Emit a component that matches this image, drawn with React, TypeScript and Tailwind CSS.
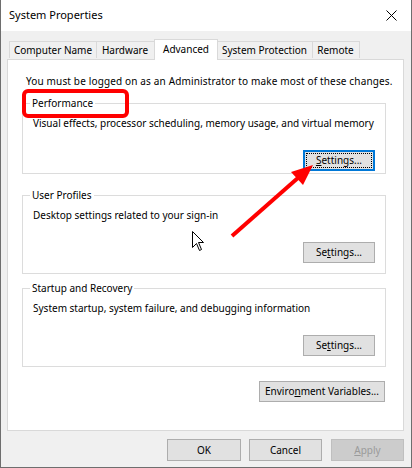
import { JSX, ReactNode } from "react";

const font = { fontFamily: '"Noto Sans", "Open Sans", sans-serif' };

function Btn({
  children,
  className = "",
  focused = false,
  disabled = false,
}: {
  children: ReactNode;
  className?: string;
  focused?: boolean;
  disabled?: boolean;
}): JSX.Element {
  if (focused) {
    return (
      <div className={`border-2 border-[#0078d7] bg-[#e1e1e1] p-px ${className}`}>
        <div className="h-full border border-dotted border-black flex items-center justify-center text-black">
          {children}
        </div>
      </div>
    );
  }
  return (
    <div
      className={`border flex items-center justify-center ${
        disabled
          ? "border-[#bfbfbf] bg-[#cccccc] text-[#9a9a9a]"
          : "border-[#adadad] bg-[#e1e1e1] text-black"
      } ${className}`}
    >
      {children}
    </div>
  );
}

function Group({
  label,
  desc,
  button,
  className,
}: {
  label: string;
  desc: string;
  button: ReactNode;
  className: string;
}): JSX.Element {
  return (
    <div className={`relative ml-[14px] w-[364px] border border-[#dcdcdc] ${className}`}>
      <span className="absolute left-[7px] -top-[9px] bg-white px-[2px] leading-4">{label}</span>
      <p className="pl-[10px] pt-[11px] leading-4">{desc}</p>
      <div className="flex justify-end pr-[10px] mt-[19px]">{button}</div>
    </div>
  );
}

export default function App(): JSX.Element {
  return (
    <div
      className="relative w-[412px] h-[468px] bg-[#f0f0f0] border-x border-b border-[#6e6e6e] text-[10px] text-black overflow-hidden whitespace-nowrap"
      style={font}
    >
      {/* title bar */}
      <div className="h-[31px] bg-white flex items-center justify-between pl-[8px] pr-[10px]">
        <span className="text-[11px]">System Properties</span>
        <svg width="11" height="11" viewBox="0 0 11 11" className="mr-[4px]">
          <path d="M0.5 0.5 L10.5 10.5 M10.5 0.5 L0.5 10.5" stroke="#000" strokeWidth="1" />
        </svg>
      </div>

      {/* tabs */}
      <div className="flex items-end h-[21px] mt-[7px] ml-[8px]">
        <div className="w-[88px] h-[17px] mb-px border-l border-t border-r border-[#d9d9d9] flex items-center justify-center">
          Computer Name
        </div>
        <div className="w-[59px] h-[17px] mb-px -ml-px border-t border-r border-[#d9d9d9] flex items-center justify-center">
          Hardware
        </div>
        <div className="relative z-10 w-[64px] h-[21px] -ml-px -mb-px border-l border-t border-r border-[#d9d9d9] bg-white flex items-center justify-center pb-[2px]">
          Advanced
        </div>
        <div className="w-[96px] h-[17px] mb-px -ml-px border-t border-r border-[#d9d9d9] flex items-center justify-center">
          System Protection
        </div>
        <div className="w-[48px] h-[17px] mb-px -ml-px border-t border-r border-[#d9d9d9] flex items-center justify-center">
          Remote
        </div>
      </div>

      {/* panel */}
      <div className="ml-[6px] w-[397px] h-[372px] border border-[#d9d9d9] bg-white">
        <p className="pl-[18px] pt-[13px] leading-4 tracking-[0.15px]">
          You must be logged on as an Administrator to make most of these changes.
        </p>
        <Group
          label="Performance"
          desc="Visual effects, processor scheduling, memory usage, and virtual memory"
          className="h-[71px] mt-[14px]"
          button={
            <Btn focused className="w-[72px] h-[21px]">
              <span>
                <u>S</u>ettings...
              </span>
            </Btn>
          }
        />
        <Group
          label="User Profiles"
          desc="Desktop settings related to your sign-in"
          className="h-[79px] mt-[21px]"
          button={
            <Btn className="w-[72px] h-[21px]">
              <span>
                Se<u>t</u>tings...
              </span>
            </Btn>
          }
        />
        <Group
          label="Startup and Recovery"
          desc="System startup, system failure, and debugging information"
          className="h-[79px] mt-[14px]"
          button={
            <Btn className="w-[72px] h-[21px]">
              <span>
                Se<u>t</u>tings...
              </span>
            </Btn>
          }
        />
        <div className="flex justify-end mt-[14px] pr-[18px]">
          <Btn className="w-[126px] h-[21px]">
            <span>
              Enviro<u>n</u>ment Variables...
            </span>
          </Btn>
        </div>
      </div>

      {/* dialog buttons */}
      <div className="flex justify-end gap-[8px] mt-[8px] pr-[7px]">
        <Btn className="w-[74px] h-[22px]">OK</Btn>
        <Btn className="w-[73px] h-[22px]">Cancel</Btn>
        <Btn disabled className="w-[73px] h-[22px] ml-px">
          <span>
            <u>A</u>pply
          </span>
        </Btn>
      </div>

      {/* annotations */}
      <div className="absolute left-[21px] top-[89px] w-[107px] h-[29px] border-4 border-[#ff0000] rounded-[6px]" />
      <svg className="absolute left-0 top-0 pointer-events-none" width="412" height="468">
        <line x1="231" y1="236" x2="298" y2="177" stroke="#ff0000" strokeWidth="4" />
        <polygon points="312,165 302,185 290,172" fill="#ff0000" />
        <path
          d="M191.5 231.5 L191.5 247.5 L195.5 243.5 L198.5 250.5 L200.5 249.5 L197.5 242.5 L202.5 242.5 Z"
          fill="#fff"
          stroke="#000"
          strokeWidth="1"
        />
      </svg>
    </div>
  );
}
